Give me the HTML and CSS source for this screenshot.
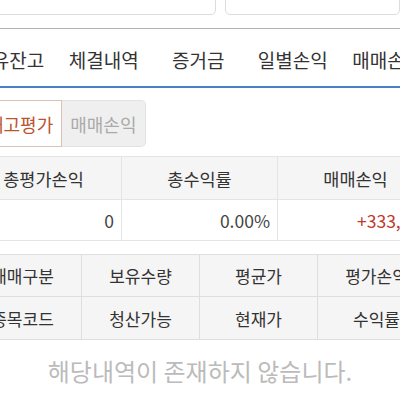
FILE: index.html
```html
<!DOCTYPE html>
<html>
  <head>
    <meta charset="UTF-8" />
    <title>잔고</title>
    <link rel="stylesheet" href="styles.css">
  </head>
  <body>
    <div class="searchRow">
      <div class="searchBox left"></div>
      <div class="searchBox right"></div>
    </div>
    <div class="tabs">
      <div class="tab">보유잔고</div>
      <div class="tab">체결내역</div>
      <div class="tab">증거금</div>
      <div class="tab">일별손익</div>
      <div class="tab">매매손익</div>
    </div>
    <div class="seg">
      <div class="segBtn on">재고평가</div>
      <div class="segBtn">매매손익</div>
    </div>
    <div class="clip">
      <div class="sumTable">
        <div class="th">총평가손익</div>
        <div class="th">총수익률</div>
        <div class="th">매매손익</div>
        <div class="td">0</div>
        <div class="td">0.00%</div>
        <div class="td up">+333,333</div>
      </div>
    </div>
    <div class="clip">
      <div class="listHead">
        <div class="hc">매매구분</div>
        <div class="hc">보유수량</div>
        <div class="hc">평균가</div>
        <div class="hc">평가손익</div>
        <div class="hc">종목코드</div>
        <div class="hc">청산가능</div>
        <div class="hc">현재가</div>
        <div class="hc">수익률</div>
      </div>
    </div>
    <div class="empty">해당내역이 존재하지 않습니다.</div>
  </body>
</html>
```

FILE: styles.css
```css
body {
  margin: 0;
  background: #fff;
  font-family: "Noto Sans CJK KR", "Noto Sans", sans-serif;
  color: #333;
  overflow: hidden;
}
.searchRow {
  display: flex;
  gap: 9px;
  margin-top: -25px;
}
.searchBox {
  height: 38px;
  border: 1px solid #dcdcdc;
  border-radius: 5px;
  background: #fff;
}
.searchBox.left {
  width: 270px;
  margin-left: -20px;
}
.searchBox.right {
  width: 200px;
}
.tabs {
  display: flex;
  margin-top: 13px;
  margin-left: -38px;
  height: 57px;
  border-top: 1px solid #b4b4b4;
  border-bottom: 2px solid #4a80c4;
}
.tab {
  flex: 0 0 94.5px;
  display: flex;
  align-items: center;
  justify-content: center;
  padding-top: 4px;
  font-size: 19px;
  color: #333;
}
.seg {
  display: flex;
  margin-top: 12px;
  margin-left: -22px;
}
.segBtn {
  height: 45px;
  padding: 0 8px;
  display: flex;
  align-items: center;
  font-size: 18px;
  color: #aaa;
  background: #efefef;
  border: 1px solid #e2e2e2;
  border-left: none;
  border-radius: 0 5px 5px 0;
}
.segBtn.on {
  color: #b9542e;
  background: #fff;
  border: 1px solid #dcc2b2;
  border-radius: 0;
}
.clip {
  overflow: hidden;
}
.sumTable {
  display: grid;
  grid-template-columns: repeat(3, 156px);
  grid-template-rows: 43px 40px;
  margin-top: 9px;
  margin-left: -34px;
  border-top: 1px solid #e4e4e4;
  border-bottom: 1px solid #e4e4e4;
}
.sumTable .th {
  background: #f5f5f5;
  border-right: 1px solid #e4e4e4;
  border-bottom: 1px solid #e4e4e4;
  display: flex;
  align-items: center;
  justify-content: center;
  font-size: 17.5px;
}
.sumTable .td {
  border-right: 1px solid #e4e4e4;
  display: flex;
  align-items: center;
  justify-content: flex-end;
  padding-right: 7px;
  font-size: 17.5px;
  color: #444;
}
.sumTable .td.up {
  justify-content: flex-start;
  padding-left: 79px;
  color: #c0392b;
  white-space: nowrap;
}
.listHead {
  display: grid;
  grid-template-columns: repeat(4, 118px);
  grid-template-rows: 42px 42px;
  margin-top: 13px;
  margin-left: -36px;
  background: #f5f5f5;
  border-top: 1px solid #dedede;
  border-bottom: 1px solid #dedede;
}
.listHead .hc {
  display: flex;
  align-items: center;
  justify-content: center;
  font-size: 17px;
  color: #333;
  border-right: 1px solid #dedede;
}
.listHead .hc:nth-child(-n+4) {
  border-bottom: 1px solid #dedede;
}
.empty {
  margin-top: 13px;
  text-align: center;
  font-size: 24px;
  color: #bbb;
}
```
